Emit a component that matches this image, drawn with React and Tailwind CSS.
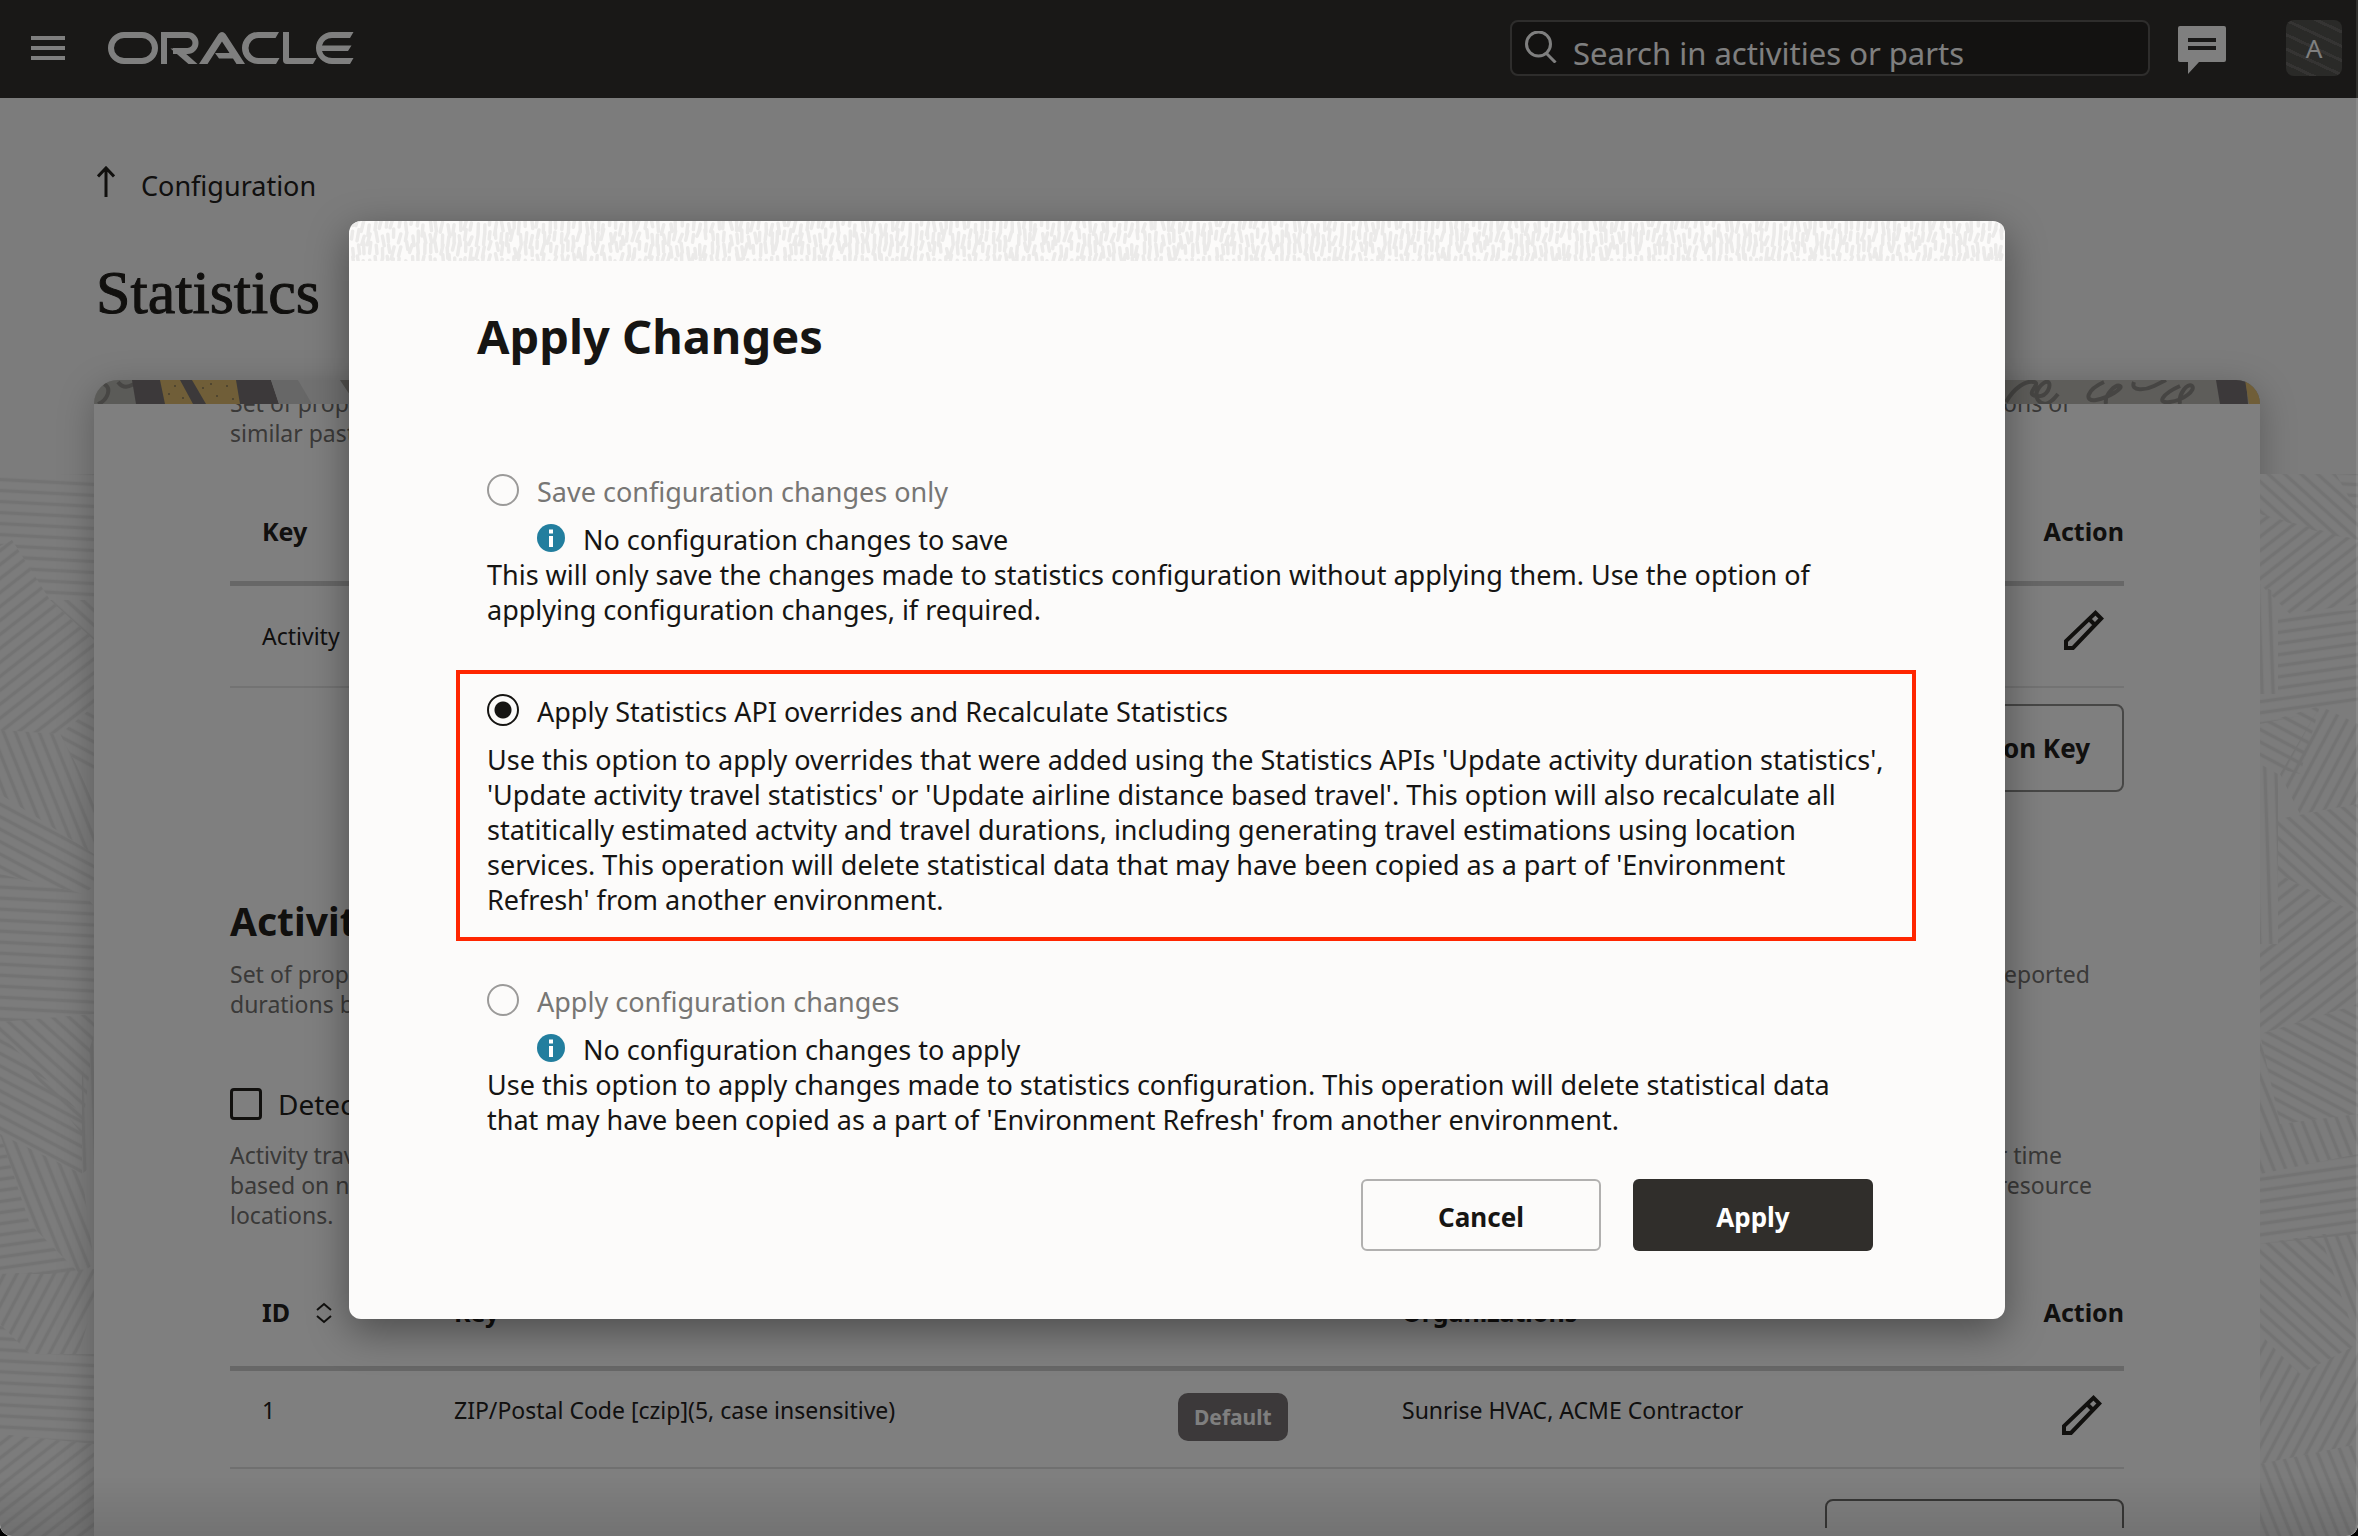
import React from "react";

/* Small deterministic generator so that the textures are the same on every load. */
function makeRandom(seed) {
  let s = seed;
  return () => {
    s = (s * 16807) % 2147483647;
    return s / 2147483647;
  };
}

const weave = (() => {
  const r = makeRandom(77);
  const strokes = [];
  for (let row = 0; row < 4; row++) {
    for (let x = 2; x < 432; x += 6) {
      const y = row * 12 - 4 + r() * 8;
      const lean = (r() - 0.4) * 5;
      strokes.push(`M${(x + r() * 2).toFixed(1)} ${y.toFixed(1)}l${(-lean).toFixed(1)} ${(7 + r() * 5).toFixed(1)}`);
    }
  }
  return strokes.join("");
})();

function WeaveStrip() {
  return (
    <svg className="block h-10 w-full" aria-hidden="true">
      <defs>
        <pattern id="weave" width="432" height="40" patternUnits="userSpaceOnUse">
          <path d={weave} stroke="#ebeae9" strokeWidth="3.5" strokeLinecap="round" fill="none" />
        </pattern>
      </defs>
      <rect width="100%" height="100%" fill="url(#weave)" />
    </svg>
  );
}

const hatchAngles = [3, -38, 68, 28, -8, -62, 42, 88];

function HatchDefs() {
  return (
    <svg className="absolute size-0" aria-hidden="true">
      <defs>
        {hatchAngles.map((a, i) => (
          <pattern key={a} id={`hatch${i}`} width="60" height="11" patternUnits="userSpaceOnUse" patternTransform={`rotate(${a})`}>
            <path d="M0 5.5H60" stroke="#e7e7e7" strokeWidth="3.5" />
          </pattern>
        ))}
      </defs>
    </svg>
  );
}

const leftPatches = [
  ["0,0 94,0 94,126 50,126 12,66 0,72", 0],
  ["0,72 12,66 50,126 94,166 94,232 60,260 0,256", 1],
  ["50,126 94,126 94,166", 6],
  ["0,256 60,260 76,290 94,330 94,300 94,380 0,320", 2],
  ["60,260 94,232 94,300 76,290", 3],
  ["0,320 94,380 94,412 84,420 0,400", 3],
  ["0,400 84,420 94,432 94,540 0,548", 0],
  ["0,548 94,540 94,560 82,660 0,560", 6],
  ["94,560 94,690 82,700 82,600", 7],
  ["0,560 82,640 82,700 0,660", 3],
  ["0,660 82,700 94,790 80,800 30,750", 2],
  ["0,660 30,750 80,800 0,800", 4],
  ["0,800 94,795 94,830 78,880 30,880 0,850", 5],
  ["0,850 30,880 94,880 94,970 0,960", 0],
  ["0,960 94,970 94,1062 0,1062", 1],
];

const rightPatches = [
  ["0,0 76,0 98,40 98,66 66,60 0,40", 6],
  ["76,0 98,0 98,40", 0],
  ["0,40 98,66 98,130 30,140 0,110", 1],
  ["0,110 18,120 18,220 0,220", 7],
  ["18,140 98,136 98,230 0,250 0,220 18,220", 4],
  ["0,250 60,232 40,300 0,290", 3],
  ["60,232 98,250 98,330 40,340 20,300", 5],
  ["0,290 18,300 18,470 0,470", 7],
  ["18,345 98,330 98,440 18,400", 6],
  ["18,400 98,440 98,530 0,560 0,470 18,470", 1],
  ["0,560 98,530 98,640 20,650", 3],
  ["0,560 20,650 98,640 98,680 0,700", 2],
  ["0,700 98,680 98,760 0,770", 4],
  ["0,770 60,760 98,870 40,900 0,860", 6],
  ["60,760 98,760 98,870", 2],
  ["0,860 40,900 98,870 98,970 0,990", 5],
  ["0,990 98,970 98,1062 0,1062", 2],
];

function HatchSide({ patches }) {
  return (
    <svg className="block h-[1062px] w-full bg-[#f8f8f8]" aria-hidden="true">
      {patches.map(([points, i]) => (
        <polygon key={points} points={points} fill={`url(#hatch${i})`} />
      ))}
    </svg>
  );
}

function BannerLeft() {
  return (
    <svg className="block h-6 w-[400px]" viewBox="0 0 400 24" aria-hidden="true">
      <path d="M0 0H400V24H0z" fill="#d6d6d6" />
      <path d="M0 0H42V24H0z" fill="#b6b6b0" />
      <path d="M4 24C14 20 18 8 10 4M24 2C30 10 36 6 40 4" stroke="#8e8c88" strokeWidth="4" fill="none" />
      <path d="M38 0H177L185 24H42z" fill="#787274" />
      <path d="M66 0H86L99 24H71z" fill="#e0bd70" />
      <path d="M98 0H142L146 24H112z" fill="#e0bd70" />
      <path d="M177 0H204L220 24H185z" fill="#cecece" />
      <path d="M204 0H246L262 24H218z" fill="#e2e2e2" />
      <path d="M246 0H400V24H262z" fill="#a8a49e" />
      <path d="M80 6h2M74 14h2M88 18h2M108 8h2M122 16h2M132 6h2M138 19h2M116 4h2" stroke="#a08c60" strokeWidth="2" />
    </svg>
  );
}

function BannerRight() {
  return (
    <svg className="block h-6 w-[320px]" viewBox="0 0 320 24" aria-hidden="true">
      <path d="M0 0H320V24H0z" fill="#bcbab4" />
      <path
        d="M66 22C74 8 86 0 94 2S84 14 96 16 112 4 108 2 92 12 98 20 112 22 118 14M164 2C146 10 144 22 156 20S184 8 180 6 164 14 166 24M194 2C190 12 206 10 214 6S226 0 226 0M240 6C222 14 216 24 230 22S256 10 252 6 238 14 240 24"
        stroke="#8c8a86"
        strokeWidth="4"
        fill="none"
      />
      <path d="M276 0H306L308 24H280z" fill="#787274" />
      <path d="M305 0H320V24H309z" fill="#e0bd70" />
    </svg>
  );
}

function OracleLogo() {
  return (
    <svg className="block h-8 w-[246px]" viewBox="108 32 246 32" role="img" aria-label="Oracle">
      <rect x="111" y="35" width="44" height="26" rx="13" fill="none" stroke="#fff" strokeWidth="6" />
      <path d="M164 64V35H187.500a8 8 0 0 1 0 16H173" fill="none" stroke="#fff" strokeWidth="6" />
      <g fill="#fff">
        <path d="M170.500 48.500H180L197.500 64H188.500z" />
        <path d="M199 64L218.500 34Q222 30 225.500 34L245 64H236.500L233 58.500H219L215 53H229.500L222 41.500L207.500 64z" />
        <path d="M279 32L275.500 38H258.500a10 10 0 0 0 0 20H279.500L276 64H258a16 16 0 0 1 0-32z" />
        <path d="M283 32H289V58H316.500L313 64H287Q283 64 283 60z" />
        <path d="M353.500 32L350 38H332Q324 38 322 45.500H351.500L348 51H322Q324 58 332 58H353.500L350 64H332a16 16 0 0 1 0-32z" />
      </g>
    </svg>
  );
}

function PencilIcon() {
  return (
    <svg className="block size-10" viewBox="0 0 40 40" fill="none" stroke="#22201d" strokeWidth="4" aria-hidden="true">
      <path d="M2 38V31L31.500 2.800L37.200 8.500L9 38zM25 9L31 15" />
    </svg>
  );
}

function SortIcon() {
  return (
    <svg className="block h-[22px] w-4" viewBox="0 0 16 22" fill="none" stroke="#22201d" strokeWidth="2" aria-hidden="true">
      <path d="M1 8L8 2L15 8M1 14L8 20L15 14" />
    </svg>
  );
}

function InfoIcon() {
  return (
    <svg className="block size-7 shrink-0" viewBox="0 0 28 28" aria-hidden="true">
      <circle cx="14" cy="14" r="14" fill="#227e9e" />
      <path d="M12 5.500h4v4h-4zM12 12h4v11h-4z" fill="#fff" />
    </svg>
  );
}

function TopBar() {
  return (
    <header className="flex h-[98px] shrink-0 items-start bg-[#33312e] pt-5 pr-4 pl-[31px]">
      <button type="button" aria-label="Menu" className="mt-4 flex w-[34px] flex-col gap-1.5">
        <span className="h-1 bg-white" />
        <span className="h-1 bg-white" />
        <span className="h-1 bg-white" />
      </button>
      <a href="#home" className="mt-3 ml-[43px]">
        <OracleLogo />
      </a>
      <label className="ml-auto flex h-14 w-[640px] rounded-lg border-2 border-[#5c5b59] bg-[#262422] pl-[13px]">
        <svg className="mt-[9px] block size-8 shrink-0" viewBox="0 0 32 32" fill="none" stroke="#fff" strokeWidth="3" aria-hidden="true">
          <circle cx="13.500" cy="13" r="12" />
          <path d="M21 22L30.500 31.500" />
        </svg>
        <input
          type="search"
          aria-label="Search in activities or parts"
          placeholder="Search in activities or parts"
          className="ml-4 min-w-0 flex-1 bg-transparent pt-2.5 text-[31px] text-white outline-none placeholder:text-white"
        />
      </label>
      <button type="button" aria-label="Messages" className="mt-1.5 ml-7">
        <svg className="block h-12 w-12" viewBox="0 0 48 48" aria-hidden="true">
          <path d="M2 0H46Q48 0 48 2V34Q48 36 46 36H21L10 48V36H2Q0 36 0 34V2Q0 0 2 0z" fill="#fff" />
          <path d="M10 12H38V16H10zM10 20H38V24H10z" fill="#33312e" />
        </svg>
      </button>
      <button
        type="button"
        className="ml-[60px] size-14 rounded-lg bg-[repeating-linear-gradient(25deg,#555451_0px,#555451_10px,#6b6966_10px,#6b6966_13px)] text-[26px] text-white"
      >
        A
      </button>
    </header>
  );
}

function GhostLine({ start, end, inset }) {
  return (
    <span className={`flex justify-between ${inset}`}>
      <span>{start}</span>
      <span>{end}</span>
    </span>
  );
}

function Panel() {
  return (
    <section className="flex min-h-0 min-w-0 flex-1 flex-col overflow-hidden rounded-t-[24px] bg-white pb-2 shadow-[0_8px_36px_rgba(0,0,0,0.25)]">
      <div className="relative z-10 flex h-6 shrink-0 justify-between bg-[#bcbab4]">
        <BannerLeft />
        <BannerRight />
      </div>
      <div className="min-h-0 flex-1 overflow-hidden px-[136px]">
        <p className="-mt-4 text-[23px] leading-[30px] text-[#747270]">
          <GhostLine start="Set of properties" end="durations of" inset="pr-[54px]" />
          <span className="block">similar past</span>
        </p>

        <table className="mt-[34px] w-full">
          <thead>
            <tr className="h-[101px] border-b-[5px] border-[#cfcfcf] text-[25px] text-[#22201d]">
              <th className="pl-8 text-left">Key</th>
              <th className="text-right">Action</th>
            </tr>
          </thead>
          <tbody>
            <tr className="h-[104px] border-b-2 border-[#e6e6e6] text-[23px] text-[#22201d]">
              <td className="pl-8">Activity</td>
              <td className="pr-5">
                <button type="button" aria-label="Edit key" className="ml-auto block pb-3">
                  <PencilIcon />
                </button>
              </td>
            </tr>
          </tbody>
        </table>
        <div className="mt-4 flex justify-end">
          <button type="button" className="h-[88px] rounded-lg border-2 border-[#8f8e8c] px-8 text-[26px] font-bold text-[#22201d]">
            Duration Key
          </button>
        </div>

        <h2 className="mt-[105px] text-[39px] leading-[48px] font-bold text-[#22201d]">Activity</h2>
        <p className="mt-3.5 text-[23px] leading-[30px] text-[#747270]">
          <GhostLine start="Set of properties" end="reported" inset="pr-[34px]" />
          <span className="block">durations by</span>
        </p>

        <label className="mt-[65px] flex items-center gap-4 text-[28px] leading-[40px] text-[#22201d]">
          <input type="checkbox" className="size-8 appearance-none rounded-[4px] border-[3px] border-[#22201d]" />
          Detect
        </label>
        <p className="mt-4 text-[23px] leading-[30px] text-[#747270]">
          <GhostLine start="Activity travel" end="or time" inset="pr-[62px]" />
          <GhostLine start="based on number" end="resource" inset="pr-8" />
          <span className="block">locations.</span>
        </p>

        <table className="mt-[30px] w-full table-fixed">
          <thead>
            <tr className="h-[108px] border-b-[5px] border-[#cfcfcf] text-left text-[25px] text-[#22201d]">
              <th className="w-[192px] pl-8">
                <span className="flex items-center gap-[26px]">
                  ID
                  <button type="button" aria-label="Sort by ID">
                    <SortIcon />
                  </button>
                </span>
              </th>
              <th className="w-[724px] pl-8">Key</th>
              <th className="w-[224px]" aria-label="Default" />
              <th className="pl-8">Organizations</th>
              <th className="w-[160px] text-right">Action</th>
            </tr>
          </thead>
          <tbody>
            <tr className="h-[100px] border-b-2 border-[#e0e0e0] align-top text-[23px] leading-[30px] text-[#22201d]">
              <td className="pt-6 pl-8">1</td>
              <td className="pt-6 pl-8">ZIP/Postal Code [czip](5, case insensitive)</td>
              <td className="pt-[22px] pl-8">
                <span className="inline-block rounded-[10px] bg-[#787274] px-4 py-2.5 text-[21px] leading-[28px] font-bold text-white">
                  Default
                </span>
              </td>
              <td className="pt-6 pl-8">Sunrise HVAC, ACME Contractor</td>
              <td className="pt-6 pr-[22px]">
                <button type="button" aria-label="Edit ZIP/Postal Code" className="ml-auto block">
                  <PencilIcon />
                </button>
              </td>
            </tr>
          </tbody>
        </table>
        <div className="mt-[30px] flex justify-end">
          <button type="button" aria-label="Add key" className="h-[88px] w-[299px] rounded-lg border-2 border-[#6e6d6b]" />
        </div>
      </div>
    </section>
  );
}

function Option({ value, label, note, checked, disabled, lines }) {
  return (
    <div>
      <label className={`flex items-start gap-[18px] leading-[36px] ${disabled ? "text-[#777674]" : "text-[#161513]"}`}>
        <input
          type="radio"
          name="apply-mode"
          value={value}
          defaultChecked={checked}
          disabled={disabled}
          className="size-8 shrink-0 appearance-none rounded-full border-2 border-[#161513] checked:bg-[radial-gradient(circle,#161513_8px,transparent_9px)] disabled:border-[#9b9a99]"
        />
        {label}
      </label>
      {note && (
        <p className="mt-3 flex items-start gap-[18px] pl-[50px]">
          <span className="pt-0.5">
            <InfoIcon />
          </span>
          {note}
        </p>
      )}
      <p className={note ? "" : "mt-3"}>
        {lines.map((line) => (
          <span key={line} className="block whitespace-nowrap">
            {line}
          </span>
        ))}
      </p>
    </div>
  );
}

function ApplyDialog() {
  return (
    <div
      role="dialog"
      aria-modal="true"
      aria-labelledby="dialog-title"
      className="w-full max-w-[1656px] overflow-hidden rounded-xl bg-[#fcfbfa] text-[#161513] shadow-[0_12px_40px_rgba(0,0,0,0.4)]"
    >
      <WeaveStrip />
      <form className="pt-[45px] pr-[89px] pb-[68px] pl-[107px] text-[27px] leading-[35px]">
        <h1 id="dialog-title" className="px-[21px] text-[47px] leading-[60px] font-bold">
          Apply Changes
        </h1>
        <div className="mt-[108px] flex flex-col gap-[43px]">
          <div className="px-[31px]">
            <Option
              value="save"
              disabled
              label="Save configuration changes only"
              note="No configuration changes to save"
              lines={[
                "This will only save the changes made to statistics configuration without applying them. Use the option of",
                "applying configuration changes, if required.",
              ]}
            />
          </div>
          <div className="border-4 border-[#ff2600] px-[27px] py-5">
            <Option
              value="overrides"
              checked
              label="Apply Statistics API overrides and Recalculate Statistics"
              lines={[
                "Use this option to apply overrides that were added using the Statistics APIs 'Update activity duration statistics',",
                "'Update activity travel statistics' or 'Update airline distance based travel'. This option will also recalculate all",
                "statitically estimated actvity and travel durations, including generating travel estimations using location",
                "services. This operation will delete statistical data that may have been copied as a part of 'Environment",
                "Refresh' from another environment.",
              ]}
            />
          </div>
          <div className="px-[31px]">
            <Option
              value="apply"
              disabled
              label="Apply configuration changes"
              note="No configuration changes to apply"
              lines={[
                "Use this option to apply changes made to statistics configuration. This operation will delete statistical data",
                "that may have been copied as a part of 'Environment Refresh' from another environment.",
              ]}
            />
          </div>
        </div>
        <div className="mt-[42px] flex justify-end gap-8 pr-[43px] text-[26px] font-bold">
          <button type="button" className="h-[72px] w-[240px] rounded-md border-2 border-[#b1b0af] pt-1">
            Cancel
          </button>
          <button type="button" className="h-[72px] w-[240px] rounded-md bg-[#302e2b] pt-1 text-white">
            Apply
          </button>
        </div>
      </form>
    </div>
  );
}

export default function App() {
  return (
    <div className="relative h-screen overflow-hidden bg-black font-['Noto_Sans','Open_Sans',sans-serif]">
      <HatchDefs />
      <div className="isolate flex h-full flex-col overflow-hidden rounded-b-[12px] bg-[#f8f8f8]" inert>
        <TopBar />
        <div className="flex min-h-0 flex-1 flex-col">
          <div className="px-[94px] pt-[68px] pb-[52px]">
            <a href="#configuration" className="flex h-10 w-max items-start text-[27px] leading-[40px] text-[#22201d]">
              <svg className="ml-[3px] block h-8 w-[18px]" viewBox="0 0 18 32" fill="none" stroke="#22201d" strokeWidth="3" aria-hidden="true">
                <path d="M9 31V2M1 10.500L9 2L17 10.500" />
              </svg>
              <span className="ml-[26px]">Configuration</span>
            </a>
            <h1 className="mt-[50px] pl-0.5 font-['Liberation_Serif',serif] text-[62px] leading-[72px] text-[#22201d] [-webkit-text-stroke:1px_#22201d]">
              Statistics
            </h1>
          </div>
          <div className="flex min-h-0 flex-1">
            <div className="w-[94px] shrink-0 overflow-hidden pt-[94px]">
              <HatchSide patches={leftPatches} />
            </div>
            <Panel />
            <div className="w-[98px] shrink-0 overflow-hidden pt-[94px]">
              <HatchSide patches={rightPatches} />
            </div>
          </div>
        </div>
      </div>
      <div className="absolute inset-0 flex items-start justify-center rounded-b-[12px] border-r-2 border-white/10 bg-black/50 bg-linear-to-t from-black/10 to-transparent to-4% pt-[221px] pr-0.5">
        <ApplyDialog />
      </div>
    </div>
  );
}
